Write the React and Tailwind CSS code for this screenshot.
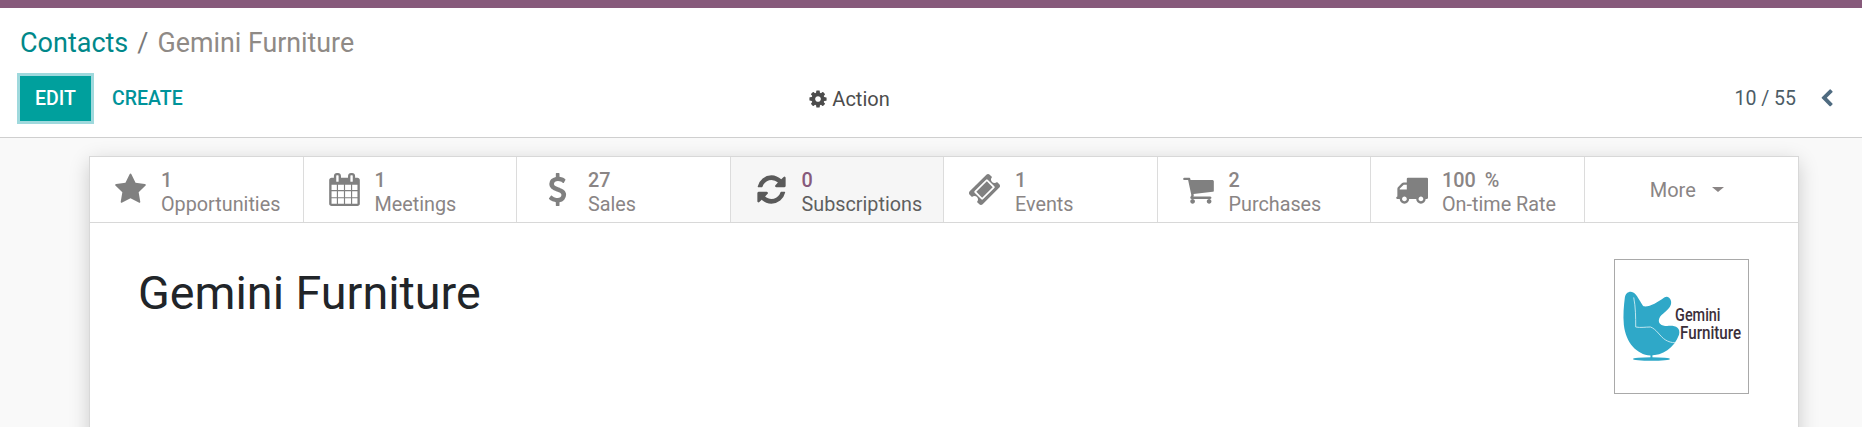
const ICONS = {
    star: 'M1728 647q0 22-26 48l-363 354 86 500q1 7 1 20 0 21-10.500 35.500t-30.500 14.500q-19 0-40-12l-449-236-449 236q-22 12-40 12-21 0-31.500-14.500t-10.500-35.500q0-6 2-20l86-500-364-354q-25-27-25-48 0-37 56-46l502-73 225-455q19-41 49-41t49 41l225 455 502 73q56 9 56 46z',
    calendar: 'M192 1664h288v-288h-288v288zm352 0h320v-288h-320v288zm-352-352h288v-320h-288v320zm352 0h320v-320h-320v320zm-352-384h288v-288h-288v288zm736 736h320v-288h-320v288zm-384-736h320v-288h-320v288zm768 736h288v-288h-288v288zm-384-352h320v-320h-320v320zm-352-864v-288q0-13-9.500-22.500t-22.500-9.500h-64q-13 0-22.500 9.500t-9.500 22.500v288q0 13 9.500 22.500t22.500 9.500h64q13 0 22.500-9.500t9.500-22.500zm736 864h288v-320h-288v320zm-384-384h320v-288h-320v288zm384 0h288v-288h-288v288zm32-480v-288q0-13-9.500-22.500t-22.500-9.500h-64q-13 0-22.500 9.500t-9.500 22.500v288q0 13 9.500 22.500t22.500 9.500h64q13 0 22.500-9.500t9.500-22.500zm384-64v1280q0 52-38 90t-90 38h-1408q-52 0-90-38t-38-90v-1280q0-52 38-90t90-38h128v-96q0-66 47-113t113-47h64q66 0 113 47t47 113v96h384v-96q0-66 47-113t113-47h64q66 0 113 47t47 113v96h128q52 0 90 38t38 90z',
    usd: 'M1362 1185q0 153-99.500 263.500t-258.500 136.500v175q0 14-9 23t-23 9h-135q-13 0-22.500-9.500t-9.500-22.500v-175q-66-9-127.500-31t-101.500-44.500-74-48-46.500-37.500-17.500-18q-17-21-2-41l103-135q7-10 23-12 15-2 24 9l2 2q113 99 243 125 37 8 74 8 81 0 142.500-43t61.500-122q0-28-15-53t-33.500-42-58.500-37.500-66-32-80-32.500q-39-16-61.500-25t-61.500-26.500-62.500-31-56.500-35.500-53.500-42.500-43.500-49-35.500-58-21-66.500-8.500-78q0-138 98-242t255-134v-180q0-13 9.500-22.500t22.500-9.500h135q14 0 23 9t9 23v176q57 6 110.500 23t87 33.500 63.500 37.500 39 29 15 14q17 18 5 38l-81 146q-8 15-23 16-14 3-27-7-3-3-14.500-12t-39-26.500-58.500-32-74.500-26-85.500-11.500q-95 0-155 43t-60 111q0 26 8.500 48t29.500 41.500 39.500 33 56 31 60.500 27 70 27.500q53 20 81 31.500t76 35 75.500 42.500 62 50 53 63.500 31.500 76.500 13 94z',
    refresh: 'M1639 1056q0 5-1 7-64 268-268 434.500t-478 166.500q-146 0-282.500-55t-243.500-157l-129 129q-19 19-45 19t-45-19-19-45v-448q0-26 19-45t45-19h448q26 0 45 19t19 45-19 45l-137 137q71 66 161 102t187 36q134 0 250-65t186-179q11-17 53-117 8-23 30-23h192q13 0 22.500 9.500t9.500 22.500zm25-800v448q0 26-19 45t-45 19h-448q-26 0-45-19t-19-45 19-45l138-138q-148-137-349-137-134 0-250 65t-186 179q-11 17-53 117-8 23-30 23h-199q-13 0-22.500-9.500t-9.500-22.500v-7q65-268 270-434.500t480-166.500q146 0 284 55.500t245 156.500l130-129q19-19 45-19t45 19 19 45z',
    ticket: 'M1024 452l316 316-572 572-316-316zm-211 979l618-618q19-19 19-45t-19-45l-362-362q-18-18-45-18t-45 18l-618 618q-19 19-19 45t19 45l362 362q18 18 45 18t45-18zm889-637l-907 908q-37 37-90.500 37t-90.500-37l-126-126q56-56 56-136t-56-136-136-56-136 56l-125-126q-37-37-37-90.500t37-90.500l907-906q37-37 90.500-37t90.500 37l125 125q-56 56-56 136t56 136 136 56 136-56l126 125q37 37 37 90.500t-37 90.500z',
    cart: 'M704 1536q0 52-38 90t-90 38-90-38-38-90 38-90 90-38 90 38 38 90zm896 0q0 52-38 90t-90 38-90-38-38-90 38-90 90-38 90 38 38 90zm128-1088v512q0 24-16.500 42.500t-40.500 21.500l-1044 122q13 60 13 70 0 16-24 64h920q26 0 45 19t19 45-19 45-45 19h-1024q-26 0-45-19t-19-45q0-11 8-31.500t16-36 21.500-40 15.500-29.500l-177-823h-204q-26 0-45-19t-19-45 19-45 45-19h256q16 0 28.500 6.500t19.500 15.500 13 24.500 8 26 5.500 29.500 4.500 26h1201q26 0 45 19t19 45z',
    truck: 'M640 1408q0-52-38-90t-90-38-90 38-38 90 38 90 90 38 90-38 38-90zm-384-512h384v-256h-158q-13 0-22 9l-195 195q-9 9-9 22v30zm1280 512q0-52-38-90t-90-38-90 38-38 90 38 90 90 38 90-38 38-90zm256-1088v1024q0 15-4 26.500t-13.500 18.500-16.500 11.500-23.500 6-22.500 2-25.500 0-22.500-.5q0 106-75 181t-181 75-181-75-75-181h-384q0 106-75 181t-181 75-181-75-75-181h-64q-3 0-22.500.5t-25.500 0-22.500-2-23.500-6-16.500-11.500-13.500-18.500-4-26.500q0-26 19-45t45-19v-320q0-8-.5-35t0-38 2.500-34.500 6.500-37 14-30.500 22.500-30l198-198q19-19 50.500-32t58.500-13h160v-192q0-26 19-45t45-19h1024q26 0 45 19t19 45z',
    cog: 'M1152 896q0-106-75-181t-181-75-181 75-75 181 75 181 181 75 181-75 75-181zm512-109v222q0 12-8 23t-20 13l-185 28q-19 54-39 91 35 50 107 138 10 12 10 25t-9 23q-27 37-99 108t-94 71q-12 0-26-9l-138-108q-44 23-91 38-16 136-29 186-7 28-36 28h-222q-14 0-24.500-8.500t-11.500-21.500l-28-184q-49-16-90-37l-141 107q-10 9-25 9-14 0-25-11-126-114-165-168-7-10-7-23 0-12 8-23 15-21 51-66.500t54-70.500q-27-50-41-99l-183-27q-13-2-21-12.500t-8-23.500v-222q0-12 8-23t19-13l186-28q14-46 39-92-40-57-107-138-10-12-10-24 0-10 9-23 26-36 98.500-107.500t94.500-71.500q13 0 26 10l138 107q44-23 91-38 16-136 29-186 7-28 36-28h222q14 0 24.500 8.500t11.500 21.500l28 184q49 16 90 37l142-107q9-9 24-9 13 0 25 10 129 119 165 170 7 8 7 22 0 12-8 23-15 21-51 66.500t-54 70.500q26 50 41 98l183 28q13 2 21 12.500t8 23.500z',
    chevron: 'M1171 301l-531 531 531 531q19 19 19 45t-19 45l-166 166q-19 19-45 19t-45-19l-742-742q-19-19-19-45t19-45l742-742q19-19 45-19t45 19l166 166q19 19 19 45t-19 45z',
}

function Fa({ name, className }) {
    return (
        <svg viewBox="0 0 1792 1792" className={className} fill="currentColor">
            <path d={ICONS[name]} />
        </svg>
    )
}

const STATS = [
    { icon: 'star', value: '1', label: 'Opportunities' },
    { icon: 'calendar', value: '1', label: 'Meetings' },
    { icon: 'usd', value: '27', label: 'Sales' },
    { icon: 'refresh', value: '0', label: 'Subscriptions', active: true },
    { icon: 'ticket', value: '1', label: 'Events' },
    { icon: 'cart', value: '2', label: 'Purchases' },
    { icon: 'truck', value: '100', unit: '%', label: 'On-time Rate' },
]

function StatButton({ icon, value, unit, label, active }) {
    return (
        <div className={`flex min-w-0 items-center pl-[24px] border-r border-[#dcdcdc] ${active ? 'bg-[#f6f6f6] text-[#5f5f5f]' : 'text-[#8a8585]'}`}>
            <Fa name={icon} className={`w-[33px] h-[33px] shrink-0 ${active ? 'text-[#5a5a5a]' : 'text-[#808080]'}`} />
            <div className="ml-[14px] flex flex-col text-[19.8px] leading-[24px] whitespace-nowrap pt-[6px]">
                <div className={`font-medium ${active ? 'text-[#875a7b]' : ''}`}>
                    {value}{unit && <span className="ml-[9px]">{unit}</span>}
                </div>
                <div>{label}</div>
            </div>
        </div>
    )
}

function Logo() {
    return (
        <div className="w-[135px] h-[135px] border border-[#a9a9a9] bg-white shrink-0">
            <svg viewBox="0 0 135 135" className="w-full h-full">
                <path d="M10 38 C11 32 17 30 21 35 C25 40 27 45 29 47 C35 48 43 43 50 38 C55 35 59 42 56 47 C54 51 47 55 45 59 C43 64 47 67 53 67 C60 66 67 68 65 76 C60 90 48 97 36 97 C22 96 11 84 9 66 C8 56 9 46 10 38 Z" fill="#2fa8c8" />
                <path d="M19 38 C21 48 21 58 21 68 C26 69 31 68 36 68 C42 70 46 78 51 81 C54 83 58 84 61 84" fill="none" stroke="#bfe6ef" strokeWidth="1" />
                <path d="M37 96 L37 100" stroke="#2fa8c8" strokeWidth="2" />
                <ellipse cx="37" cy="100.500" rx="19" ry="1.800" fill="#2fa8c8" />
                <text transform="translate(61 62) scale(0.77 1)" fontFamily="Roboto, sans-serif" fontSize="19" fontWeight="500" fill="#3c2f3a">Gemini</text>
                <text transform="translate(66 80) scale(0.81 1)" fontFamily="Roboto, sans-serif" fontSize="19" fontWeight="500" fill="#3c2f3a">Furniture</text>
            </svg>
        </div>
    )
}

export default function App() {
    return (
        <div className="h-[427px] w-full overflow-hidden flex flex-col bg-white font-['Roboto',sans-serif]">
            <div className="h-2 shrink-0 bg-[#875a7b]" />

            {/* control panel */}
            <div className="h-[130px] shrink-0 border-b border-[#cfcfcf] bg-white">
                <div className="pl-5 pt-[18px] h-[60px] text-[27px] leading-[34px] whitespace-nowrap">
                    <span className="text-[#00888a]">Contacts</span>
                    <span className="text-[#7a7a7a] mx-[9px]">/</span>
                    <span className="text-[#8f8a86] text-[26.8px]">Gemini Furniture</span>
                </div>
                <div className="grid grid-cols-3 items-center pl-5 pr-[23px] h-[45px] mt-[8px]">
                    <div className="flex items-center">
                        <button className="w-[71px] h-[45px] bg-[#00a09d] text-white text-[19.5px] font-medium ring-[3px] ring-[#9fd9dd]">EDIT</button>
                        <span className="ml-[21px] text-[19.5px] font-medium text-[#00939a]">CREATE</span>
                    </div>
                    <div className="flex items-center text-[20px] text-[#4c4c4c] pl-[182px]">
                        <Fa name="cog" className="w-[20px] h-[20px] mr-[4px]" />
                        Action
                    </div>
                    <div className="flex items-center justify-end text-[19.5px] text-[#4c5c66]">
                        10 / 55
                        <Fa name="chevron" className="w-[19px] h-[19px] ml-[24px] text-[#4f6b80]" />
                    </div>
                </div>
            </div>

            {/* form view */}
            <div className="flex-1 min-h-0 bg-[#f9f9f9] pl-[89px] pr-[63px] pt-[18px]">
                <div className="h-[400px] bg-white border border-[#d8d8d8] shadow-[0_5px_20px_-1px_rgba(0,0,0,0.2)]">
                    <div className="grid grid-cols-8 h-[66px] border-b border-[#d8d8d8]">
                        {STATS.map((s) => <StatButton key={s.label} {...s} />)}
                        <div className="flex min-w-0 items-center justify-center pr-[9px] text-[20px] text-[#8a8585]">
                            More
                            <span className="ml-[16px] w-0 h-0 border-x-[6px] border-x-transparent border-t-[5px] border-t-[#8a8585]" />
                        </div>
                    </div>
                    <div className="flex justify-between pl-[48px] pr-[49px] pt-[36px]">
                        <h1 className="text-[46.7px] leading-[56px] text-[#212529] whitespace-nowrap pt-[6px]">Gemini Furniture</h1>
                        <Logo />
                    </div>
                </div>
            </div>
        </div>
    )
}
